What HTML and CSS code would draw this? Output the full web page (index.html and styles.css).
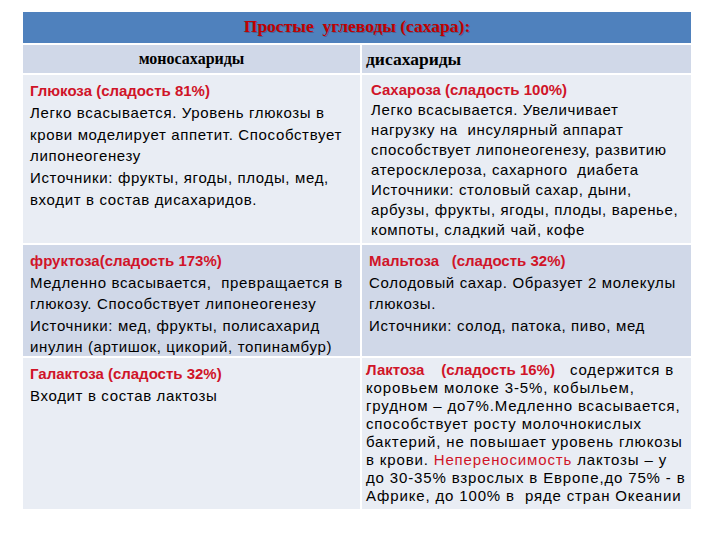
FILE: index.html
```html
<!DOCTYPE html>
<html lang="ru">
<head>
<meta charset="utf-8">
<link rel="stylesheet" href="styles.css">
</head>
<body>
<div class="table">
  <div class="head">Простые&nbsp; углеводы (сахара):</div>
  <div class="sub sub-left">моносахариды</div>
  <div class="sub sub-right">дисахариды</div>

  <div class="cell light lh22">
    <span class="red">Глюкоза (сладость 81%)</span><br>
    Легко всасывается. Уровень глюкозы в<br>
    крови моделирует аппетит. Способствует<br>
    липонеогенезу<br>
    Источники: фрукты, ягоды, плоды, мед,<br>
    входит в состав дисахаридов.
  </div>
  <div class="cell light lh20 indent">
    <span class="red">Сахароза (сладость 100%)</span><br>
    Легко всасывается. Увеличивает<br>
    нагрузку на&nbsp; инсулярный аппарат<br>
    способствует липонеогенезу, развитию<br>
    атеросклероза, сахарного&nbsp; диабета<br>
    Источники: столовый сахар, дыни,<br>
    арбузы, фрукты, ягоды, плоды, варенье,<br>
    компоты, сладкий чай, кофе
  </div>

  <div class="cell dark lh21">
    <span class="red">фруктоза(сладость 173%)</span><br>
    Медленно всасывается,&nbsp; превращается в<br>
    глюкозу. Способствует липонеогенезу<br>
    Источники: мед, фрукты, полисахарид<br>
    инулин (артишок, цикорий, топинамбур)
  </div>
  <div class="cell dark lh21">
    <span class="red">Мальтоза&nbsp;&nbsp; (сладость 32%)</span><br>
    Солодовый сахар. Образует 2 молекулы<br>
    глюкозы.<br>
    Источники: солод, патока, пиво, мед
  </div>

  <div class="cell light lh21">
    <span class="red">Галактоза (сладость 32%)</span><br>
    Входит в состав лактозы
  </div>
  <div class="cell light lh18">
    <span class="red">Лактоза&nbsp;&nbsp;&nbsp; (сладость 16%)</span>&nbsp;&nbsp; содержится в<br>
    коровьем молоке 3-5%, кобыльем,<br>
    грудном – до7%.Медленно всасывается,<br>
    способствует росту молочнокислых<br>
    бактерий, не повышает уровень глюкозы<br>
    в крови. <span class="red2">Непереносимость</span> лактозы – у<br>
    до 30-35% взрослых в Европе,до 75% - в<br>
    Африке, до 100% в&nbsp; ряде стран Океании
  </div>
</div>
</body>
</html>
```
FILE: styles.css
```css
html, body {
  margin: 0;
  padding: 0;
  background: #ffffff;
}
body {
  width: 720px;
  height: 540px;
  overflow: hidden;
}
.table {
  margin: 12px 0 0 23px;
  width: 668px;
  display: grid;
  grid-template-columns: 337px 329px;
  grid-template-rows: 31px 28px 168px 111px 151px;
  column-gap: 2px;
  row-gap: 2px;
}
.head {
  grid-column: 1 / 3;
  background: #4f81bd;
  color: #c00000;
  font-family: "Liberation Serif", serif;
  font-weight: bold;
  font-size: 17.5px;
  display: flex;
  align-items: center;
  justify-content: center;
  padding-bottom: 2px;
  text-shadow: 1px 1px 0 rgba(60, 40, 60, 0.35);
}
.sub {
  background: #d0d8e8;
  font-family: "Liberation Serif", serif;
  font-weight: bold;
  color: #000;
  display: flex;
  align-items: center;
}
.sub-left {
  justify-content: center;
  font-size: 16px;
}
.sub-right {
  font-size: 17.5px;
  padding-left: 4px;
}
.cell {
  font-family: "Liberation Sans", sans-serif;
  font-size: 15px;
  letter-spacing: 0.65px;
  color: #000;
  padding: 5px 0 0 7px;
  white-space: nowrap;
}
.light { background: #e9edf4; }
.dark { background: #d0d8e8; }
.lh22 { line-height: 21.8px; }
.lh21 { line-height: 21.5px; }
.lh20 { line-height: 20px; }
.lh18 { line-height: 18px; padding-top: 3px; padding-left: 4px; letter-spacing: 0.85px; }
.indent { padding-left: 9px; }
.red {
  color: #d01428;
  font-weight: bold;
  letter-spacing: 0;
}
.red2 {
  color: #d01428;
}
```
